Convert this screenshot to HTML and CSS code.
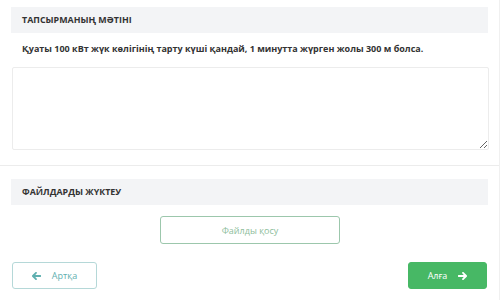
FILE: index.html
```html
<!DOCTYPE html>
<html lang="kk">
<head>
    <meta charset="UTF-8">
    <meta name="viewport" content="width=device-width, initial-scale=1.0">
    <title>Тапсырма</title>
    <link rel="stylesheet" href="styles.css">
</head>
<body>
    <div class="task-card">
        <div class="section">
            <div class="section-title">ТАПСЫРМАНЫҢ МӘТІНІ</div>
            <p class="question">Қуаты 100 кВт жүк көлігінің тарту күші қандай, 1 минутта жүрген жолы 300 м болса.</p>
            <textarea class="answer"></textarea>
        </div>
        <div class="section upload">
            <div class="section-title">ФАЙЛДАРДЫ ЖҮКТЕУ</div>
            <div class="upload-row">
                <button class="btn-upload">Файлды қосу</button>
            </div>
        </div>
        <div class="nav-buttons">
            <button class="btn-back">
                <svg width="9" height="8" viewBox="0 0 9 8"><path d="M4 0.8 L0.9 4 L4 7.2 M1 4 H8.4" stroke="currentColor" stroke-width="1.8" fill="none" stroke-linecap="round" stroke-linejoin="round"/></svg>
                Артқа
            </button>
            <button class="btn-next">
                Алға
                <svg width="9" height="8" viewBox="0 0 9 8"><path d="M5 0.8 L8.1 4 L5 7.2 M8 4 H0.6" stroke="currentColor" stroke-width="1.8" fill="none" stroke-linecap="round" stroke-linejoin="round"/></svg>
            </button>
        </div>
    </div>
</body>
</html>
```

FILE: styles.css
```css
body {
    margin: 0;
    font-family: "Open Sans", "Noto Sans", sans-serif;
    background: #fff;
    color: #333;
}
.task-card {
    width: 500px;
    height: 300px;
    box-sizing: border-box;
    border-right: 1px solid #f0f0f0;
    overflow: hidden;
}
.section {
    padding: 7px 11px 0 11px;
}
.section-title {
    background: #f3f4f6;
    height: 26px;
    line-height: 26px;
    padding-left: 11px;
    font-size: 8.9px;
    font-weight: 700;
    color: #333;
}
.question {
    margin: 10px 0 0 11px;
    font-size: 9px;
    font-weight: 700;
    line-height: 12px;
    color: #333;
}
.answer {
    display: block;
    width: 477px;
    height: 83px;
    margin: 12px 0 0 1px;
    box-sizing: border-box;
    border: 1px solid #ececec;
    border-radius: 2px;
    resize: vertical;
    font-family: inherit;
}
.upload {
    margin-top: 15px;
    border-top: 1px solid #ececec;
    padding-top: 13px;
}
.upload-row {
    display: flex;
    justify-content: center;
    padding-top: 11px;
}
.btn-upload {
    width: 180px;
    height: 28px;
    margin-left: 1px;
    background: #fff;
    border: 1px solid #9cc7ac;
    border-radius: 3px;
    color: #8dbd9b;
    font-family: inherit;
    font-size: 9px;
}
.nav-buttons {
    display: flex;
    justify-content: space-between;
    padding: 18px 12px 0 12px;
}
.nav-buttons button {
    display: flex;
    align-items: center;
    justify-content: center;
    gap: 11px;
    height: 27px;
    border-radius: 3px;
    font-family: inherit;
    font-size: 9px;
}
.btn-back {
    width: 85px;
    background: #fff;
    border: 1px solid #b5d8d8;
    color: #5fb0b0;
}
.btn-next {
    width: 79px;
    background: #47b865;
    border: 1px solid #47b865;
    color: #fff;
}
```
